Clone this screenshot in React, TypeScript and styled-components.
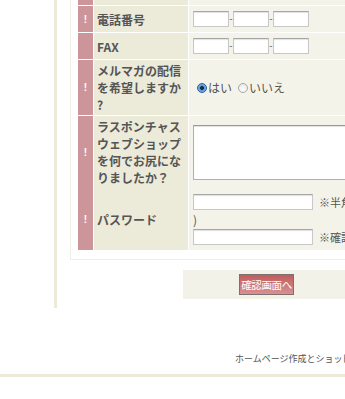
import React from 'react';
import styled, { createGlobalStyle } from 'styled-components';

const Global = createGlobalStyle`
  html, body { margin: 0; padding: 0; background: #fff; overflow: hidden; }
  body { font-family: "Noto Sans CJK JP", "Noto Sans", sans-serif; color: #555; }
`;

const Page = styled.div`
  width: 700px;
`;

const Column = styled.div`
  margin: -29px 0 0 54px;
  border-left: 3px solid #ecead8;
  padding: 0 0 9px 13px;
`;

const FormBox = styled.div`
  background: #fff;
  border: 1px solid #f0efe6;
  padding: 7px 7px 9px;
  width: 440px;
`;

const Table = styled.div`
  display: flex;
  flex-direction: column;
  gap: 1px;
  background: #fff;
  width: 420px;
`;

const Row = styled.div<{ $h: number }>`
  display: grid;
  grid-template-columns: 15px 94px 1fr;
  column-gap: 1px;
  height: ${(p) => p.$h}px;
`;

const Mark = styled.div`
  background: #cb959a;
  display: flex;
  align-items: center;
  justify-content: center;
  color: #fff;
  font-weight: bold;
  font-size: 10px;
  font-family: "Liberation Sans", sans-serif;
`;

const Label = styled.div`
  background: #ecebd9;
  padding: 2px 3px;
  display: flex;
  align-items: center;
  font-size: 12px;
  line-height: 17px;
  font-weight: bold;
  color: #555;
`;

const Value = styled.div`
  background: #f4f3ea;
  padding: 5px 4px;
  display: flex;
  flex-direction: column;
  justify-content: center;
  align-items: flex-start;
  overflow: hidden;
`;

const Inline = styled.div`
  display: flex;
  align-items: center;
`;

const SmallInput = styled.input`
  box-sizing: border-box;
  width: 36px;
  height: 16px;
  margin: 0;
  padding: 0;
  border: 1px solid #c8c8c8;
  border-top-color: #a6a6a6;
  box-shadow: inset 0 1px 1px rgba(0, 0, 0, 0.12);
  background: #fff;
`;

const Dash = styled.span`
  width: 4px;
  text-align: center;
  font-size: 10px;
  line-height: 10px;
  color: #777;
  font-family: "Liberation Sans", sans-serif;
`;

const Radio = styled.span<{ $on?: boolean }>`
  box-sizing: border-box;
  width: 10px;
  height: 10px;
  border-radius: 50%;
  margin: 0 1px 0 4px;
  border: 1px solid ${(p) => (p.$on ? '#2d5f9c' : '#a8a8a8')};
  background: ${(p) =>
    p.$on
      ? 'radial-gradient(circle, #1c2c44 0 1.6px, #5d97da 2.2px, #8dbcf0 100%)'
      : 'radial-gradient(circle at 50% 70%, #ffffff, #e2e2e2)'};
`;

const RadioText = styled.span`
  font-size: 12px;
  line-height: 17px;
  color: #555;
  margin-right: 2px;
`;

const TextArea = styled.textarea`
  box-sizing: border-box;
  display: block;
  width: 250px;
  height: 55px;
  margin: 0;
  border: 1px solid #b0b0b0;
  border-top-color: #999;
  box-shadow: inset 0 1px 1px rgba(0, 0, 0, 0.12);
  background: #fff;
  resize: none;
`;

const PassLine = styled.div`
  display: flex;
  align-items: center;
  gap: 6px;
  height: 16px;
`;

const PassInput = styled.input`
  box-sizing: border-box;
  width: 120px;
  height: 16px;
  margin: 0;
  padding: 0;
  border: 1px solid #c8c8c8;
  border-top-color: #a6a6a6;
  box-shadow: inset 0 1px 1px rgba(0, 0, 0, 0.12);
  background: #fff;
`;

const Note = styled.span`
  font-size: 11px;
  color: #555;
  white-space: nowrap;
`;

const Paren = styled.div`
  font-size: 12px;
  line-height: 19px;
  height: 19px;
  color: #555;
`;

const ButtonBar = styled.div`
  margin: 10px 0 0 113px;
  width: 167px;
  height: 29px;
  background: #f3f2e8;
  display: flex;
  align-items: center;
  justify-content: center;
`;

const SubmitButton = styled.button`
  box-sizing: border-box;
  width: 55px;
  height: 21px;
  padding: 0;
  border: 1px solid #7d7070;
  background: linear-gradient(#c25c5c, #d89191);
  color: #fff;
  font-family: "Noto Sans CJK JP", sans-serif;
  font-size: 10.5px;
  line-height: 19px;
  letter-spacing: -0.4px;
  white-space: nowrap;
  overflow: hidden;
`;

const Footer = styled.div`
  margin-top: 44px;
`;

const FooterText = styled.div`
  margin-left: 235px;
  font-size: 9px;
  line-height: 14px;
  color: #555;
  white-space: nowrap;
`;

const FooterLine = styled.div`
  margin-top: 8px;
  height: 3px;
  background: #ecead8;
`;

const Phone = () => (
  <Inline>
    <SmallInput />
    <Dash>-</Dash>
    <SmallInput />
    <Dash>-</Dash>
    <SmallInput />
  </Inline>
);

export default function App() {
  return (
    <Page>
      <Global />
      <Column>
        <FormBox>
          <Table>
            <Row $h={26}>
              <Mark />
              <Label />
              <Value />
            </Row>
            <Row $h={26}>
              <Mark>!</Mark>
              <Label>
                <span>電話番号</span>
              </Label>
              <Value>
                <Phone />
              </Value>
            </Row>
            <Row $h={26}>
              <Mark />
              <Label>
                <span>FAX</span>
              </Label>
              <Value>
                <Phone />
              </Value>
            </Row>
            <Row $h={55}>
              <Mark>!</Mark>
              <Label>
                <span>
                  メルマガの配信
                  <br />
                  を希望しますか
                  <br />?
                </span>
              </Label>
              <Value>
                <Inline>
                  <Radio $on />
                  <RadioText>はい</RadioText>
                  <Radio />
                  <RadioText>いいえ</RadioText>
                </Inline>
              </Value>
            </Row>
            <Row $h={71}>
              <Mark>!</Mark>
              <Label>
                <span>
                  ラスポンチャス
                  <br />
                  ウェブショップ
                  <br />
                  を何でお尻にな
                  <br />
                  りましたか？
                </span>
              </Label>
              <Value>
                <TextArea />
              </Value>
            </Row>
            <Row $h={62}>
              <Mark>!</Mark>
              <Label>
                <span>パスワード</span>
              </Label>
              <Value>
                <PassLine>
                  <PassInput type="password" />
                  <Note>※半角英数字6文字以上</Note>
                </PassLine>
                <Paren>)</Paren>
                <PassLine>
                  <PassInput type="password" />
                  <Note>※確認のため再度入力してください</Note>
                </PassLine>
              </Value>
            </Row>
          </Table>
        </FormBox>
        <ButtonBar>
          <SubmitButton type="button">確認画面へ</SubmitButton>
        </ButtonBar>
      </Column>
      <Footer>
        <FooterText>ホームページ作成とショッピングカート付きネットショップ開業サービス</FooterText>
        <FooterLine />
      </Footer>
    </Page>
  );
}
